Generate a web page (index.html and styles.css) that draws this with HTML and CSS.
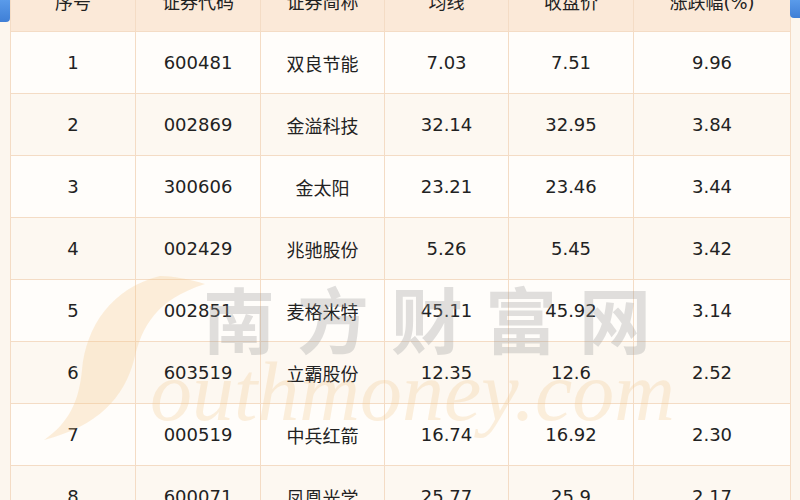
FILE: index.html
```html
<!DOCTYPE html>
<html lang="zh">
<head>
<meta charset="utf-8">
<title>均线数据</title>
<link rel="stylesheet" href="styles.css">
</head>
<body>
<div class="page">
  <div class="ribbon ribbon-left"></div>
  <div class="ribbon ribbon-right"></div>
  <table class="data">
    <colgroup>
      <col class="c1"><col class="c2"><col class="c3"><col class="c4"><col class="c5"><col class="c6">
    </colgroup>
    <thead>
      <tr><th>序号</th><th>证券代码</th><th>证券简称</th><th>均线</th><th>收盘价</th><th>涨跌幅(%)</th></tr>
    </thead>
    <tbody>
      <tr><td>1</td><td>600481</td><td>双良节能</td><td>7.03</td><td>7.51</td><td>9.96</td></tr>
      <tr><td>2</td><td>002869</td><td>金溢科技</td><td>32.14</td><td>32.95</td><td>3.84</td></tr>
      <tr><td>3</td><td>300606</td><td>金太阳</td><td>23.21</td><td>23.46</td><td>3.44</td></tr>
      <tr><td>4</td><td>002429</td><td>兆驰股份</td><td>5.26</td><td>5.45</td><td>3.42</td></tr>
      <tr><td>5</td><td>002851</td><td>麦格米特</td><td>45.11</td><td>45.92</td><td>3.14</td></tr>
      <tr><td>6</td><td>603519</td><td>立霸股份</td><td>12.35</td><td>12.6</td><td>2.52</td></tr>
      <tr><td>7</td><td>000519</td><td>中兵红箭</td><td>16.74</td><td>16.92</td><td>2.30</td></tr>
      <tr><td>8</td><td>600071</td><td>凤凰光学</td><td>25.77</td><td>25.9</td><td>2.17</td></tr>
    </tbody>
  </table>
  <svg class="watermark" width="800" height="500" viewBox="0 0 800 500">
    <path class="swoosh" d="M160 276 C112 288 86 326 82 370 C79 400 70 422 44 440 C98 426 124 398 134 360 C142 326 156 300 205 284 C190 279 172 276 160 276 Z"/>
    <text class="wm-cn" x="203" y="348">南方财富网</text>
    <text class="wm-en" x="150" y="420">outhmoney.com</text>
  </svg>
</div>
</body>
</html>
```

FILE: styles.css
```css
html, body {
  margin: 0;
  padding: 0;
}
body {
  background: #fcf6ee;
  width: 800px;
  height: 500px;
  overflow: hidden;
  font-family: "DejaVu Sans", "Noto Sans CJK SC", sans-serif;
}
.page {
  position: relative;
  width: 800px;
  height: 500px;
  overflow: hidden;
  padding: 0 10px;
  box-sizing: border-box;
}
.ribbon {
  position: absolute;
  top: 0;
  width: 10px;
  background: linear-gradient(180deg, #5a9bea, #3f7fd6);
}
.ribbon-left {
  left: 0;
  height: 22px;
  border-bottom-right-radius: 4px;
}
.ribbon-right {
  right: 0;
  height: 18px;
  border-bottom-left-radius: 4px;
}
.data {
  border-collapse: collapse;
  table-layout: fixed;
  width: 780px;
  margin-top: -31px;
  color: #222;
  font-size: 18px;
}
.c1, .c2 { width: 125px; }
.c3, .c4 { width: 124px; }
.c5 { width: 125px; }
.c6 { width: 157px; }
.data th, .data td {
  height: 61px;
  padding: 0;
  text-align: center;
  vertical-align: middle;
  border: 1px solid #f4dcc5;
  font-weight: normal;
}
.data th {
  background: #fbe9d8;
}
.data tbody tr:nth-child(odd) td {
  background: #fffdfa;
}
.data tbody tr:nth-child(even) td {
  background: #fdf8f1;
}
.watermark {
  position: absolute;
  left: 0;
  top: 0;
  pointer-events: none;
}
.swoosh {
  fill: #f6c98e;
  opacity: 0.3;
}
.wm-cn {
  font-family: "Noto Sans CJK SC", sans-serif;
  font-weight: 700;
  font-size: 72px;
  letter-spacing: 22px;
  fill: #9a9a9a;
  opacity: 0.3;
}
.wm-en {
  font-family: "Liberation Serif", serif;
  font-style: italic;
  font-size: 84px;
  fill: #f2c88f;
  opacity: 0.28;
}
```
